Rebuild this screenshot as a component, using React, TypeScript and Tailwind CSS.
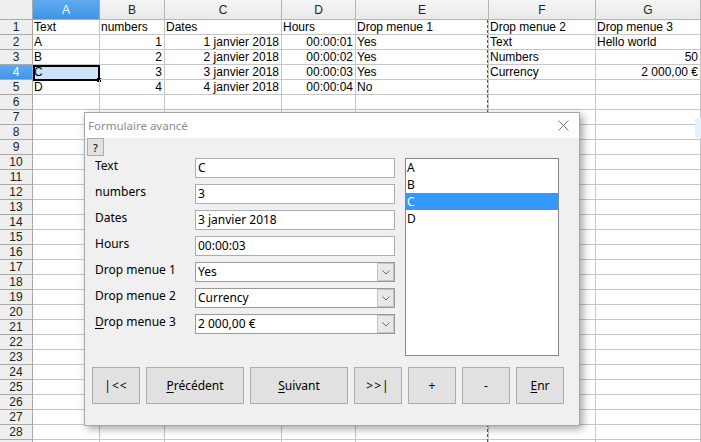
import React from "react";

type C = { t: string; r?: boolean };

const L = (t: string): C => ({ t });
const R = (t: string): C => ({ t, r: true });

const data: C[][] = [
  [L("Text"), L("numbers"), L("Dates"), L("Hours"), L("Drop menue 1"), L("Drop menue 2"), L("Drop menue 3")],
  [L("A"), R("1"), R("1 janvier 2018"), R("00:00:01"), L("Yes"), L("Text"), L("Hello world")],
  [L("B"), R("2"), R("2 janvier 2018"), R("00:00:02"), L("Yes"), L("Numbers"), R("50")],
  [L("C"), R("3"), R("3 janvier 2018"), R("00:00:03"), L("Yes"), L("Currency"), R("2 000,00 €")],
  [L("D"), R("4"), R("4 janvier 2018"), R("00:00:04"), L("No"), L(""), L("")],
];

const colLetters = ["A", "B", "C", "D", "E", "F", "G"];
const ROWS = 29;

function Chevron() {
  return (
    <svg width="8" height="5" viewBox="0 0 8 5" fill="none">
      <path d="M0.5 0.5 L4 4 L7.5 0.5" stroke="#6b6b6b" strokeWidth="1" />
    </svg>
  );
}

function TextField({ value }: { value: string }) {
  return (
    <div className="w-[200px] h-[20px] border border-[#abadb3] bg-white flex items-center pl-[2px] text-[12px] text-black">
      {value}
    </div>
  );
}

function Combo({ value }: { value: string }) {
  return (
    <div className="w-[200px] h-[20px] border border-[#9a9a9a] bg-white flex items-center text-[12px] text-black">
      <div className="flex-1 pl-[2px]">{value}</div>
      <div className="w-[17px] h-[18px] border border-[#c4c4c4] bg-[#e8e8e8] flex items-center justify-center">
        <Chevron />
      </div>
    </div>
  );
}

function Btn({ w, children }: { w: string; children: React.ReactNode }) {
  return (
    <div
      className={
        "h-[37px] border border-[#adadad] bg-[#e1e1e1] flex items-center justify-center text-[12px] text-black " + w
      }
    >
      {children}
    </div>
  );
}

export default function App() {
  const formRows: { label: React.ReactNode; field: React.ReactNode }[] = [
    { label: "Text", field: <TextField value="C" /> },
    { label: "numbers", field: <TextField value="3" /> },
    { label: "Dates", field: <TextField value="3 janvier 2018" /> },
    { label: "Hours", field: <TextField value="00:00:03" /> },
    { label: "Drop menue 1", field: <Combo value="Yes" /> },
    { label: "Drop menue 2", field: <Combo value="Currency" /> },
    {
      label: (
        <span>
          <span className="underline underline-offset-2">D</span>rop menue 3
        </span>
      ),
      field: <Combo value="2 000,00 €" />,
    },
  ];

  return (
    <div
      className="relative w-[701px] h-[442px] overflow-hidden bg-white text-black"
      style={{ fontFamily: '"Liberation Sans", Arial, sans-serif' }}
    >
      {/* Spreadsheet grid */}
      <div className="grid grid-cols-[33px_67px_65px_117px_74px_133px_107px_1fr] text-[12px]">
        <div className="h-[20px] border-r border-b border-[#a9a9a9] bg-[#efefef]" />
        {colLetters.map((l, i) => (
          <div
            key={l}
            className={
              i === 0
                ? "h-[20px] border-r border-b border-[#7fb2e5] bg-gradient-to-b from-[#5eaaf0] to-[#3f95e6] text-white flex items-center justify-center leading-none"
                : "h-[20px] border-r border-b border-[#b5b5b5] bg-gradient-to-b from-[#f5f5f5] to-[#e9e9e9] text-[#222] flex items-center justify-center leading-none"
            }
          >
            {l}
          </div>
        ))}
        {Array.from({ length: ROWS }).map((_, ri) => {
          const row = data[ri];
          const sel = ri === 3;
          return (
            <React.Fragment key={ri}>
              <div
                className={
                  sel
                    ? "h-[15px] border-r border-b border-[#7fb2e5] bg-gradient-to-b from-[#5eaaf0] to-[#3f95e6] text-white text-[12px] leading-[14px] text-center"
                    : "h-[15px] border-r border-b border-[#a9a9a9] bg-[#efefef] text-[#222] text-[12px] leading-[14px] text-center"
                }
              >
                {ri < 28 ? ri + 1 : ""}
              </div>
              {colLetters.map((l, ci) => {
                const c = row ? row[ci] : undefined;
                const isSel = sel && ci === 0;
                return (
                  <div
                    key={l}
                    className={
                      (isSel ? "relative bg-[#cde3f8] " : "relative ") +
                      (c && c.r ? "text-right pr-[2px] " : "pl-[1px] ") +
                      "h-[15px] border-r border-b border-[#c6c6c6] leading-[15px] whitespace-nowrap overflow-visible"
                    }
                  >
                    {c ? c.t : ""}
                    {isSel && (
                      <>
                        <div className="absolute left-0 top-[0px] w-[67px] h-[16px] border-2 border-black pointer-events-none" />
                        <div className="absolute left-[64px] top-[13px] w-[4px] h-[4px] bg-black" />
                      </>
                    )}
                  </div>
                );
              })}
            </React.Fragment>
          );
        })}
      </div>

      {/* page break line */}
      <div className="absolute left-[487px] top-[20px] bottom-0 w-0 border-l border-dashed border-[#555]" />
      {/* light blue patch at right edge */}
      <div className="absolute right-0 top-[118px] w-[6px] h-[20px] bg-[#e6f1fb]" />

      {/* Dialog */}
      <div
        className="absolute left-[84px] top-[112px] w-[496px] h-[314px] border border-[#a8a8a8] bg-[#f0f0f0] shadow-[3px_3px_8px_rgba(0,0,0,0.35)] flex flex-col"
        style={{ fontFamily: '"Noto Sans", "Open Sans", sans-serif' }}
      >
        <div className="h-[25px] bg-white flex items-center justify-between pl-[3px] pr-[10px]">
          <span className="text-[11.5px] text-[#8c8c8c]">Formulaire avancé</span>
          <svg width="11" height="11" viewBox="0 0 11 11">
            <path d="M0.5 0.5 L10.5 10.5 M10.5 0.5 L0.5 10.5" stroke="#7a7a7a" strokeWidth="1" />
          </svg>
        </div>
        <div className="flex flex-col pl-[2px]">
          <div className="w-[17px] h-[18px] border border-[#adadad] bg-[#e1e1e1] flex items-center justify-center text-[11px] leading-none">
            ?
          </div>
          <div className="flex mt-[2px] pl-[8px]">
            <div className="flex flex-col gap-[6px]">
              {formRows.map((r, i) => (
                <div key={i} className="flex h-[20px]">
                  <div className="w-[100px] text-[12px] leading-[16px] text-black">{r.label}</div>
                  {r.field}
                </div>
              ))}
            </div>
            <div className="ml-[10px] w-[154px] h-[198px] border border-[#828790] bg-white text-[12px] text-black">
              <div className="h-[17px] pl-[1px] leading-[17px]">A</div>
              <div className="h-[17px] pl-[1px] leading-[17px]">B</div>
              <div className="h-[17px] pl-[1px] leading-[17px] bg-[#3399ff] text-white">C</div>
              <div className="h-[17px] pl-[1px] leading-[17px]">D</div>
            </div>
          </div>
          <div className="flex gap-[6px] mt-[11px] pl-[5px]">
            <Btn w="w-[48px]">
              <span className="tracking-[1px]">|&lt;&lt;</span>
            </Btn>
            <Btn w="w-[98px]">
              <span>
                <span className="underline underline-offset-2">P</span>récédent
              </span>
            </Btn>
            <Btn w="w-[98px]">
              <span>
                <span className="underline underline-offset-2">S</span>uivant
              </span>
            </Btn>
            <Btn w="w-[48px]">
              <span className="tracking-[1px]">&gt;&gt;|</span>
            </Btn>
            <Btn w="w-[48px]">+</Btn>
            <Btn w="w-[48px]">-</Btn>
            <Btn w="w-[48px]">
              <span>
                <span className="underline underline-offset-2">E</span>nr
              </span>
            </Btn>
          </div>
        </div>
      </div>
    </div>
  );
}
